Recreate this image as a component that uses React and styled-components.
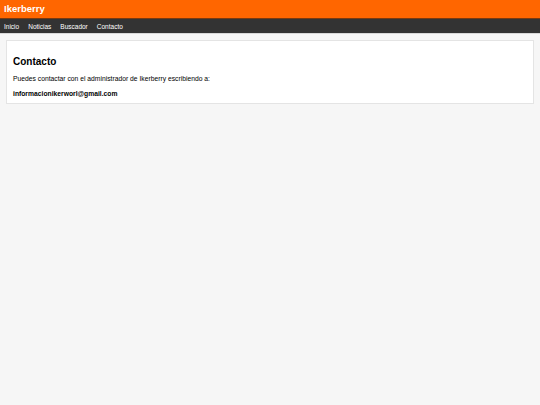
import styled, { createGlobalStyle } from 'styled-components';

const GlobalStyle = createGlobalStyle`
  html, body {
    margin: 0;
    padding: 0;
    background: #f6f6f6;
    font-family: 'Liberation Sans', Arial, sans-serif;
  }
`;

const Header = styled.header`
  background: #ff6600;
  height: 18px;
  padding: 0 4px;
  display: flex;
  align-items: center;
  border-bottom: 1px solid #7a3a10;
`;

const Brand = styled.h1`
  margin: 0;
  color: #fff;
  font-size: 9.5px;
  font-weight: bold;
  line-height: 1;
`;

const Nav = styled.nav`
  background: #333;
  height: 14px;
  padding: 0 4px;
  display: flex;
  align-items: center;
  gap: 9px;
  border-bottom: 1px solid #d8d8d8;
`;

const NavLink = styled.a`
  color: #fff;
  font-size: 6.5px;
  text-decoration: none;
`;

const Main = styled.main`
  padding: 6px;
`;

const Card = styled.section`
  background: #fff;
  border: 1px solid #e4e4e4;
  padding: 15px 6px 5px;
`;

const Title = styled.h2`
  margin: 0 0 6px;
  font-size: 10px;
  font-weight: bold;
  color: #000;
  line-height: 12px;
`;

const Text = styled.p`
  margin: 0 0 6px;
  font-size: 6.75px;
  line-height: 9px;
  color: #000;
  font-weight: ${(p) => (p.$bold ? 'bold' : 'normal')};

  &:last-child {
    margin-bottom: 0;
  }
`;

export default function App() {
  return (
    <>
      <GlobalStyle />
      <Header>
        <Brand>Ikerberry</Brand>
      </Header>
      <Nav>
        <NavLink href="#">Inicio</NavLink>
        <NavLink href="#">Noticias</NavLink>
        <NavLink href="#">Buscador</NavLink>
        <NavLink href="#">Contacto</NavLink>
      </Nav>
      <Main>
        <Card>
          <Title>Contacto</Title>
          <Text>Puedes contactar con el administrador de Ikerberry escribiendo a:</Text>
          <Text $bold>informacionikerworl@gmail.com</Text>
        </Card>
      </Main>
    </>
  );
}
